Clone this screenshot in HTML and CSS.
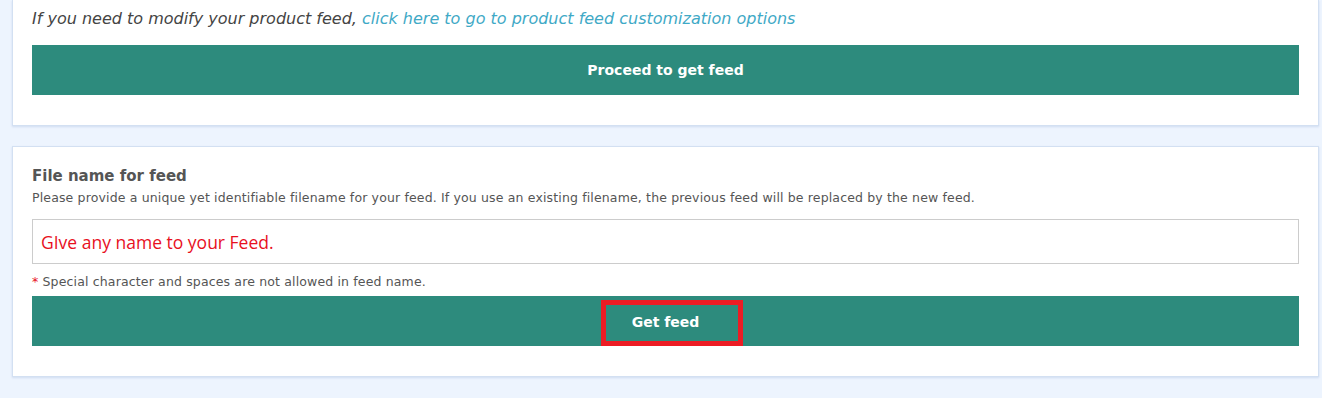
FILE: index.html
```html
<!DOCTYPE html>
<html lang="en">
<head>
    <meta charset="UTF-8">
    <meta name="viewport" content="width=device-width, initial-scale=1.0">
    <title>Get Feed</title>
    <link rel="stylesheet" href="styles.css">
</head>
<body>

    <div class="page">

        <!-- Customization Section -->
        <section class="card card-top">
            <p class="hint">If you need to modify your product feed, <a href="#">click here to go to product feed customization options</a></p>
            <button class="btn" type="button">Proceed to get feed</button>
        </section>

        <!-- File Name Section -->
        <section class="card card-file">
            <h2>File name for feed</h2>
            <p class="desc">Please provide a unique yet identifiable filename for your feed. If you use an existing filename, the previous feed will be replaced by the new feed.</p>
            <input class="name-input" type="text" placeholder="GIve any name to your Feed.">
            <p class="note"><span class="star">*</span> Special character and spaces are not allowed in feed name.</p>
            <div class="btn btn-get">
                Get feed
                <span class="highlight"></span>
            </div>
        </section>

    </div>

</body>
</html>
```

FILE: styles.css
```css
body {
    font-family: "DejaVu Sans", sans-serif;
    margin: 0;
    padding: 0;
    background-color: #fff;
    color: #555;
}

.page {
    background-color: #edf4fe;
    padding: 0 3px 21px 12px;
}

.card {
    background-color: #fff;
    border: 1px solid #d3e0f2;
    box-shadow: 0 1px 2px rgba(120, 150, 200, 0.25);
    padding: 0 19px 30px 19px;
}

.card-top {
    border-top: none;
    padding-top: 7px;
}

.card-file {
    margin-top: 20px;
    padding-top: 19px;
}

.hint {
    font-style: italic;
    font-size: 16px;
    line-height: 24px;
    margin: 0 0 14px 0;
    color: #444;
}

.hint a {
    color: #3fa9c6;
    text-decoration: none;
}

.btn {
    display: flex;
    align-items: center;
    justify-content: center;
    width: 100%;
    height: 50px;
    border: none;
    background-color: #2d8b7d;
    color: #fff;
    font-family: inherit;
    font-size: 14px;
    font-weight: bold;
}

h2 {
    font-size: 15px;
    font-weight: 600;
    line-height: 20px;
    margin: 0 0 3px 0;
    color: #555;
}

.desc {
    font-size: 12.5px;
    letter-spacing: 0.15px;
    line-height: 18px;
    margin: 0 0 12px 0;
}

.name-input {
    display: block;
    box-sizing: border-box;
    width: 100%;
    height: 45px;
    border: 1px solid #ccc;
    padding: 0 8px;
    font-family: "Open Sans", sans-serif;
    font-size: 17.5px;
}

.name-input::placeholder {
    color: #e8101e;
    opacity: 1;
}

.note {
    font-size: 12.5px;
    letter-spacing: 0.15px;
    line-height: 18px;
    margin: 9px 0 5px 0;
}

.star {
    color: #e8101e;
}

.btn-get {
    position: relative;
    padding-top: 2px;
    box-sizing: border-box;
}

/* red marker drawn over the button */
.highlight {
    position: absolute;
    left: 50%;
    top: 4px;
    margin-left: -65px;
    box-sizing: border-box;
    width: 142px;
    height: 46px;
    border: 5px solid #ec1c24;
}
```
